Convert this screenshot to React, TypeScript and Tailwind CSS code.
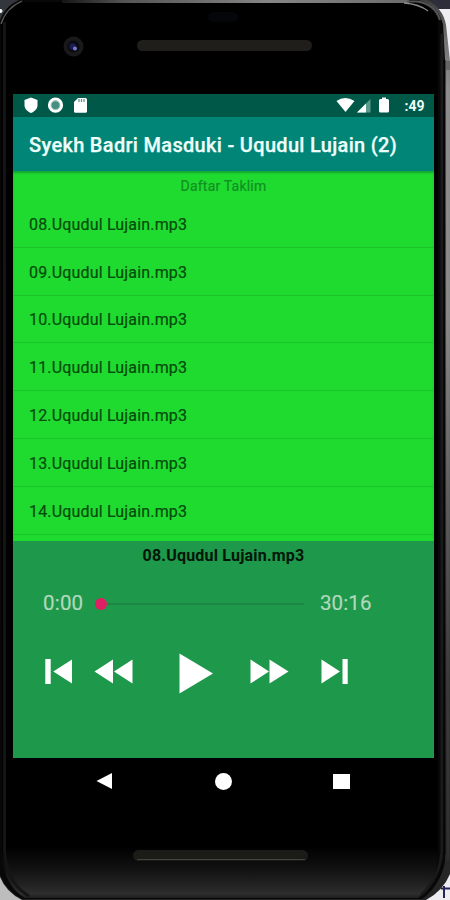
import type { ReactNode } from 'react';

const tracks = ['08', '09', '10', '11', '12', '13', '14'];

function PhoneShell() {
  return (
    <svg className="absolute inset-0" width="450" height="900" viewBox="0 0 450 900" aria-hidden="true">
      <defs>
        <linearGradient id="rightEdge" gradientUnits="userSpaceOnUse" x1="0" y1="0" x2="0" y2="900">
          <stop offset="0" stopColor="#3e3e3e" />
          <stop offset="0.05" stopColor="#777" />
          <stop offset="0.1" stopColor="#8a8a8b" />
          <stop offset="0.35" stopColor="#858586" />
          <stop offset="0.55" stopColor="#59595a" />
          <stop offset="0.75" stopColor="#363637" />
          <stop offset="1" stopColor="#242424" />
        </linearGradient>
        <linearGradient id="chin" gradientUnits="userSpaceOnUse" x1="0" y1="0" x2="0" y2="900">
          <stop offset="0" stopColor="#000" />
          <stop offset="0.94" stopColor="#000" />
          <stop offset="0.965" stopColor="#111" />
          <stop offset="0.983" stopColor="#222" />
          <stop offset="0.993" stopColor="#2e2e2e" />
          <stop offset="1" stopColor="#171717" />
        </linearGradient>
        <linearGradient id="topEdge" x1="0" y1="0" x2="1" y2="0">
          <stop offset="0" stopColor="#151515" />
          <stop offset="0.18" stopColor="#555" />
          <stop offset="0.6" stopColor="#858585" />
          <stop offset="1" stopColor="#6c6c6c" />
        </linearGradient>
      </defs>
      <rect width="450" height="900" fill="#ededf2" />
      <rect y="870" width="30" height="30" fill="#bdbdbd" />
      <rect width="30" height="20" fill="#33363c" />
      <rect x="420" width="30" height="9" fill="#2d2e39" />
      <circle cx="0.5" cy="11" r="2" fill="#f3f3f3" />
      <path d="M0 20Q5 6 19 0H427Q443 8 446 25L450 61V874Q443 891 426 900H22Q6 892 0 877Z" fill="url(#rightEdge)" />
      <path d="M0 20Q5 6 19 0H418Q438 5 443 24L445 60V862Q440 886 422 899H22Q6 891 0 875Z" fill="#080808" />
      <path d="M1 22Q7 6 21 2H418Q434 5 438 22V852Q437 885 418 898H25Q4 886 2 855Z" fill="url(#chin)" />
      <rect x="62" y="0" width="347" height="3" fill="url(#topEdge)" />
      <path d="M407 1.5H417Q435 4 440 20" fill="none" stroke="#555" strokeWidth="2" />
      <path d="M404 3Q419 4 428 11" fill="none" stroke="#8b8b8b" strokeWidth="1.3" />
      <path d="M1 24Q6 8 22 1" fill="none" stroke="#5b5b5b" strokeWidth="1.3" />
      <path d="M4.5 22V850Q6 883 29 896" fill="none" stroke="#151515" strokeWidth="3" />
      <path d="M442 34V850Q440 878 421 895" fill="none" stroke="#1a1a1a" strokeWidth="3" />
      <path d="M444.5 60V855" stroke="#050505" strokeWidth="2" />
      <path d="M448 62V860" stroke="#ffffff" strokeOpacity="0.08" strokeWidth="1" />
      <path d="M446 61H450V70H446Z" fill="#666" />
      <rect x="208" y="12" width="30" height="10" rx="5" fill="#050609" />
      <circle cx="73.5" cy="46.5" r="10" fill="#191919" />
      <circle cx="73.5" cy="46.5" r="6" fill="#0a0a12" />
      <circle cx="72.5" cy="46.5" r="3.2" fill="#1c1d52" />
      <circle cx="75" cy="48.5" r="2" fill="#777bd0" />
      <rect x="137" y="40" width="175" height="11" rx="5.5" fill="#201e1b" />
      <rect x="133" y="850" width="175" height="11" rx="5.5" fill="#1b1b18" />
      <path d="M137 859.5H305" stroke="#42423e" strokeWidth="1" />
      <path d="M441 888.5H450M444 886V898" stroke="#24245b" strokeWidth="2" />
    </svg>
  );
}

function Control({ label, className, children }: { label: string; className: string; children: ReactNode }) {
  return <button aria-label={label} className={`block shrink-0 ${className}`}>{children}</button>;
}

export default function App() {
  return (
    <main className="relative h-[900px] w-[450px] overflow-hidden bg-black font-['Roboto',sans-serif]">
      <PhoneShell />
      <section className="relative mt-[94px] ml-[13px] flex h-[704px] w-[421px] flex-col">
        <header className="shrink-0">
          <div className="flex h-[23px] items-center bg-[#005948] pr-[8px] pb-[1px] pl-[11px]">
            <svg width="66" height="18" viewBox="0 0 66 18" fill="#fff" aria-hidden="true">
              <path d="M7 1.5L13.5 4V9C13.5 13 10.5 15.5 7 17C3.5 15.5.5 13 .5 9V4Z" />
              <circle cx="31.5" cy="9.2" r="6.1" fill="#478f80" stroke="#fff" strokeWidth="3" />
              <circle cx="31.5" cy="9.2" r="4.4" fill="none" stroke="#a7cbc3" strokeWidth="1" />
              <path d="M54 2H61.5Q63 2 63 3.5V15.2Q63 16.7 61.5 16.7H51.5Q50 16.7 50 15.2V6Z" />
              <path d="M55 3V6M57.5 3V6M60 3V6" stroke="#609c8d" strokeWidth="1.3" />
            </svg>
            <svg className="ml-auto" width="55" height="18" viewBox="0 0 55 18" fill="#fff" aria-hidden="true">
              <path d="M.5 5Q9 -1 18.5 5L9.5 16Z" />
              <path d="M21 16.5L34.5 3V16.5Z" fill="#5b9a8c" />
              <path d="M21 16.5L30 7.5V16.5Z" />
              <path d="M46 1.5H50V3H51.5Q53 3 53 4.5V15Q53 16.5 51.5 16.5H44.5Q43 16.5 43 15V4.5Q43 3 44.5 3H46Z" />
            </svg>
            <span className="ml-[14px] w-[21.5px] pt-[2px] text-[14px] leading-none font-bold text-[#e9fff9]">:49</span>
          </div>
          <div className="flex h-[54px] items-center bg-[#008577] pt-[2px] pl-4">
            <h1 className="text-[20px] leading-none font-medium tracking-[0.31px] whitespace-nowrap text-[#effffb] [-webkit-text-stroke:0.25px_#effffb]">Syekh Badri Masduki - Uqudul Lujain (2)</h1>
          </div>
        </header>
        <div className="flex h-[370px] shrink-0 flex-col overflow-hidden bg-[#1fdb30] shadow-[inset_0_2px_2px_rgba(0,70,50,.35)]">
          <p className="h-[29px] shrink-0 pt-[7px] text-center text-[14px] leading-[16px] tracking-[0.2px] text-[#129022] [-webkit-text-stroke:0.2px_#129022]">Daftar Taklim</p>
          <ul>
            {tracks.map((number) => (
              <li key={number} className="flex h-[47.8px] items-center border-b-[1.5px] border-[#1bc32b] pt-[3px] pl-4 text-[16px] tracking-[0.17px] text-[#064b0b] [-webkit-text-stroke:0.2px_#064b0b]">
                {number}.Uqudul Lujain.mp3
              </li>
            ))}
          </ul>
        </div>
        <div className="h-[217px] shrink-0 bg-[#1e984a]">
          <p className="pt-[6px] text-center text-[16px] leading-[18px] font-bold tracking-[0.2px] text-[#021608]">08.Uqudul Lujain.mp3</p>
          <div className="mt-[26px] flex h-[25px] items-center pl-[30px] text-[20.5px] leading-none text-[#b3d8bd] [-webkit-text-stroke:0.2px_#b3d8bd]">
            <span className="w-[52px] tracking-[0.2px]">0:00</span>
            <span className="size-3 rounded-full bg-[#df1f63]" />
            <span className="h-[2px] w-[197px] bg-[#1a8742]" />
            <span className="ml-[16px] tracking-[0.1px]">30:16</span>
          </div>
          <div className="mt-[35px] flex h-[44px] items-start pl-[32px] text-white">
            <Control label="Previous" className="mt-[8px] w-[28px]"><svg width="28" height="26" fill="currentColor"><path d="M.3 0H5.7V25H.3ZM27 .5V24.5L8.3 12.5Z" /></svg></Control>
            <Control label="Rewind" className="mt-[8px] ml-[21px] w-[39px]"><svg width="39" height="26" fill="currentColor"><path d="M19 .5V24.5L.5 12.5ZM38.5 .5V24.5L20 12.5Z" /></svg></Control>
            <Control label="Play" className="mt-[2px] ml-[46px] w-[35px]"><svg width="35" height="42" fill="currentColor"><path d="M.5 0.5V40.5L34 20.5Z" /></svg></Control>
            <Control label="Fast forward" className="mt-[8px] ml-[36px] w-[39px]"><svg width="39" height="26" fill="currentColor"><path d="M.5 .5V24.5L19 12.5ZM19.5 .5V24.5L38.5 12.5Z" /></svg></Control>
            <Control label="Next" className="mt-[8px] ml-[32px] w-[28px]"><svg width="28" height="26" fill="currentColor"><path d="M.5 .5V24.5L19 12.5ZM21.5 0H26.7V25H21.5Z" /></svg></Control>
          </div>
        </div>
        <nav className="flex h-10 shrink-0 items-center justify-between pt-[6px] pr-[84px] pl-[83px]">
          <svg width="17" height="18" fill="white"><path d="M16 1V17L.5 9Z" /></svg>
          <span className="size-[17px] rounded-full bg-white" />
          <span className="h-[15px] w-[17px] bg-white" />
        </nav>
      </section>
    </main>
  );
}
